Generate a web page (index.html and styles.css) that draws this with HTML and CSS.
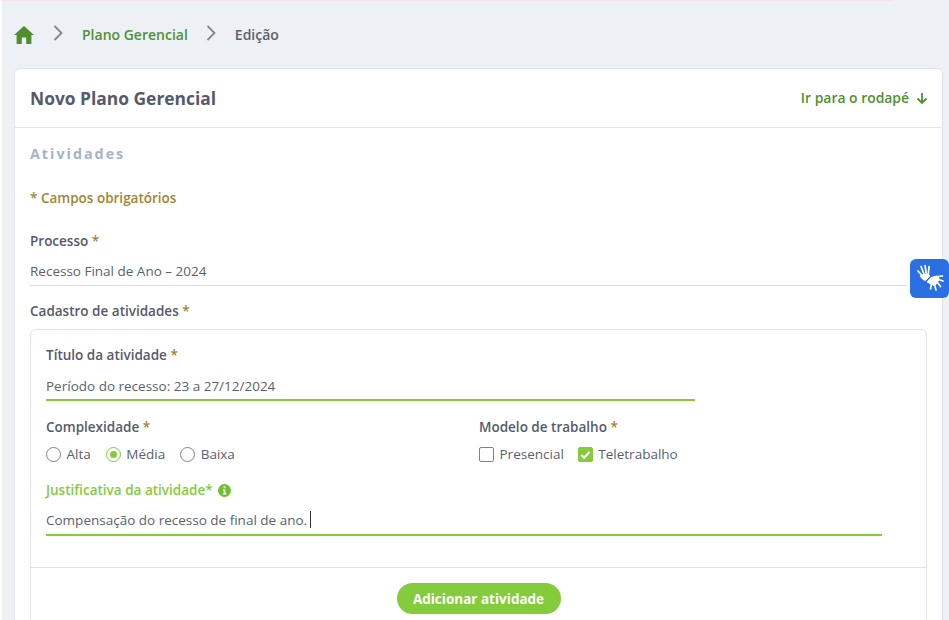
FILE: index.html
```html
<!DOCTYPE html>
<html lang="pt-BR">
<head>
    <meta charset="UTF-8">
    <title>Novo Plano Gerencial</title>
    <link rel="stylesheet" href="styles.css">
</head>
<body>
    <div class="top-line"></div>
    <div class="page">
        <nav class="breadcrumb">
            <svg class="home-icon" viewBox="0 0 20 18"><path d="M10 0 L20 9 L17.4 9 L17.4 18 L12.2 18 L12.2 11.6 L7.8 11.6 L7.8 18 L2.6 18 L2.6 9 L0 9 Z"/></svg>
            <svg class="chevron" viewBox="0 0 10 16"><path d="M1.5 1 L8.5 8 L1.5 15"/></svg>
            <a href="#" class="crumb-link">Plano Gerencial</a>
            <svg class="chevron" viewBox="0 0 10 16"><path d="M1.5 1 L8.5 8 L1.5 15"/></svg>
            <span class="crumb-current">Edição</span>
        </nav>

        <div class="card">
            <div class="card-header">
                <h1>Novo Plano Gerencial</h1>
                <a href="#" class="footer-link">Ir para o rodapé
                    <svg viewBox="0 0 12 12"><path d="M6 1 V11 M1.5 6.5 L6 11 L10.5 6.5"/></svg>
                </a>
            </div>
            <div class="card-body">
                <h2>Atividades</h2>
                <p class="required-note">* Campos obrigatórios</p>

                <div class="label process-label">Processo <span class="star">*</span></div>
                <div class="readonly-field">Recesso Final de Ano – 2024</div>

                <div class="label">Cadastro de atividades <span class="star">*</span></div>
                <div class="activity-box">
                    <div class="activity-form">
                        <div class="label">Título da atividade <span class="star">*</span></div>
                        <div class="input-line title-input">Período do recesso: 23 a 27/12/2024</div>

                        <div class="option-columns">
                            <div>
                                <div class="label">Complexidade <span class="star">*</span></div>
                                <div class="options">
                                    <span class="option"><i class="radio"></i>Alta</span>
                                    <span class="option"><i class="radio checked"></i>Média</span>
                                    <span class="option"><i class="radio"></i>Baixa</span>
                                </div>
                            </div>
                            <div>
                                <div class="label">Modelo de trabalho <span class="star">*</span></div>
                                <div class="options work-options">
                                    <span class="option"><i class="checkbox"></i>Presencial</span>
                                    <span class="option"><i class="checkbox checked"><svg viewBox="0 0 14 14"><path d="M2.5 7.5 L5.5 10.5 L11.5 4"/></svg></i>Teletrabalho</span>
                                </div>
                            </div>
                        </div>

                        <div class="label active-label">Justificativa da atividade*
                            <svg class="info-icon" viewBox="0 0 14 14"><circle cx="7" cy="7" r="7"/><rect x="6" y="2.6" width="2" height="2"/><path d="M5.3 6 H8 V10 H9 V11.3 H5.3 V10 H6.2 V7.3 H5.3 Z"/></svg>
                        </div>
                        <div class="input-line reason-input">Compensação do recesso de final de ano.<span class="caret"></span></div>
                    </div>
                    <div class="activity-actions">
                        <button type="button">Adicionar atividade</button>
                    </div>
                </div>
            </div>
        </div>
    </div>

    <div class="libras-widget">
        <svg viewBox="0 0 28 28">
            <g class="hand-back">
                <path class="finger" d="M2 7 L6.5 12 M5 2.5 L8 10 M9 1.5 L10.3 9.5 M13 2.5 L12.3 10"/>
                <path class="palm" d="M4 12 L7.5 10.5 L13 10.5 L13.5 12.5 L9.5 16.5 L7 15.5 Z"/>
            </g>
            <g class="hand-front">
                <path class="hand-gap" d="M11 18 L15 13.5 L21 12 L23 14 L21.5 19 L18 21.5 L15 20 Z"/>
                <path class="palm" d="M11 18 L15 13.5 L21 12 L23 14 L21.5 19 L18 21.5 L15 20 Z"/>
                <path class="finger" d="M21.5 12.5 L26.5 12 M22.5 15.5 L27 17 M21.5 18.5 L24.5 22.5 M18.5 20.5 L20 26 M15.5 20 L14.5 25"/>
            </g>
        </svg>
    </div>
</body>
</html>
```

FILE: styles.css
```css
* {
    box-sizing: border-box;
}

html,
body {
    height: 620px;
    overflow: hidden;
}

body {
    margin: 0;
    padding: 0 6px 0 2px;
    background-color: #edf1f5;
    font-family: "Open Sans", Arial, sans-serif;
    font-size: 14px;
    color: #5a5f70;
    position: relative;
}

body::before {
    content: "";
    position: absolute;
    left: 0;
    top: 0;
    width: 2px;
    height: 100%;
    background-color: #fff;
}

.top-line {
    height: 1px;
    width: 890px;
    background-color: #f3e3ec;
}

.page {
    padding: 0 0 0 12px;
}

.breadcrumb {
    display: flex;
    align-items: center;
    height: 67px;
}

.home-icon {
    width: 20px;
    height: 18px;
    fill: #4f8f2f;
    margin-right: 19px;
}

.chevron {
    width: 10px;
    height: 16px;
    fill: none;
    stroke: #7d8794;
    stroke-width: 1.8;
    margin-top: -3px;
}

.crumb-link {
    color: #4f9132;
    font-weight: 600;
    text-decoration: none;
    margin: 0 18px 0 19px;
}

.crumb-current {
    font-weight: 600;
    margin-left: 19px;
}

.card {
    background-color: #fff;
    border: 1px solid #dfe3ea;
    border-radius: 6px 6px 0 0;
    height: 560px;
    overflow: hidden;
}

.card-header {
    display: flex;
    justify-content: space-between;
    align-items: center;
    height: 59px;
    padding: 0 14px 1px 15px;
    border-bottom: 1px solid #e4e6ea;
}

h1 {
    margin: 0;
    font-size: 17.4px;
    font-weight: 700;
    color: #555a6b;
}

.footer-link {
    display: flex;
    align-items: center;
    gap: 7px;
    color: #4f9132;
    font-size: 13.9px;
    font-weight: 600;
    text-decoration: none;
}

.footer-link svg {
    width: 12px;
    height: 12px;
    fill: none;
    stroke: #4f9132;
    stroke-width: 1.8;
}

.card-body {
    padding: 16px 15px 0 15px;
}

h2 {
    margin: 0;
    font-size: 14.3px;
    line-height: 20px;
    font-weight: 700;
    letter-spacing: 2px;
    color: #a5b3c8;
}

.required-note {
    margin: 24px 0 0 0;
    line-height: 20px;
    font-size: 13.5px;
    font-weight: 600;
    color: #a28434;
}

.label {
    font-size: 13.5px;
    line-height: 20px;
    font-weight: 600;
    color: #555a6b;
}

.star {
    color: #a28434;
}

.process-label {
    margin-top: 23px;
}

.readonly-field {
    font-size: 13.5px;
    line-height: 20px;
    margin-top: 10px;
    padding-bottom: 4px;
    border-bottom: 1px solid #dcdee4;
    margin-bottom: 15px;
    margin-right: 20px;
}

.activity-box {
    margin-top: 8px;
    border: 1px solid #dfe3ea;
    border-radius: 6px;
    height: 300px;
}

.activity-form {
    padding: 15px 15px 0 15px;
    height: 238px;
    border-bottom: 1px solid #e2e2e2;
}

.input-line {
    font-size: 13.5px;
    line-height: 20px;
    border-bottom: 2px solid #84cc3c;
    padding-bottom: 3px;
    margin-top: 11px;
}

.title-input {
    width: 649px;
}

.reason-input {
    width: 836px;
    margin-top: 10px;
    padding-bottom: 4px;
}

.caret {
    display: inline-block;
    width: 1px;
    height: 17px;
    background-color: #333;
    margin-left: 3px;
    vertical-align: -3px;
}

.option-columns {
    display: grid;
    grid-template-columns: 433px 1fr;
    margin-top: 16px;
}

.options {
    display: flex;
    gap: 15px;
    margin-top: 7px;
    line-height: 20px;
}

.work-options {
    gap: 14px;
}

.option {
    display: flex;
    align-items: center;
    gap: 5.5px;
    font-size: 13.5px;
}

.radio {
    width: 15px;
    height: 15px;
    border: 1px solid #7d8290;
    border-radius: 50%;
    display: flex;
    align-items: center;
    justify-content: center;
}

.radio.checked {
    border-color: #84cc3c;
}

.radio.checked::after {
    content: "";
    width: 7px;
    height: 7px;
    border-radius: 50%;
    background-color: #84cc3c;
}

.checkbox {
    width: 15px;
    height: 15px;
    border: 1px solid #7d8290;
    border-radius: 2px;
    display: block;
}

.checkbox.checked {
    background-color: #84cc3c;
    border-color: #84cc3c;
}

.checkbox svg {
    display: block;
    width: 13px;
    height: 13px;
    fill: none;
    stroke: #fff;
    stroke-width: 2.2;
}

.active-label {
    color: #84cc3c;
    margin-top: 16px;
    display: flex;
    align-items: center;
    gap: 5px;
}

.info-icon {
    width: 13px;
    height: 13px;
}

.info-icon circle {
    fill: #6fbe35;
}

.info-icon rect,
.info-icon path {
    fill: #fff;
}

.activity-actions {
    display: flex;
    justify-content: center;
    padding-top: 15px;
}

button {
    width: 164px;
    height: 31px;
    border: none;
    border-radius: 16px;
    background-color: #84cc3c;
    color: #fff;
    font-family: inherit;
    font-size: 13.5px;
    font-weight: 700;
}

.libras-widget {
    position: absolute;
    left: 910px;
    top: 259px;
    width: 39px;
    height: 39px;
    background-color: #2a70e2;
    border-radius: 6px;
    padding: 5px 6px;
}

.libras-widget svg {
    display: block;
    width: 28px;
    height: 28px;
}

.palm {
    fill: #fff;
    stroke: #fff;
    stroke-width: 1;
    stroke-linejoin: round;
}

.finger {
    fill: none;
    stroke: #fff;
    stroke-width: 1.7;
    stroke-linecap: round;
}

.hand-front .hand-gap {
    fill: #2a70e2;
    stroke: #2a70e2;
    stroke-width: 3;
}
```
